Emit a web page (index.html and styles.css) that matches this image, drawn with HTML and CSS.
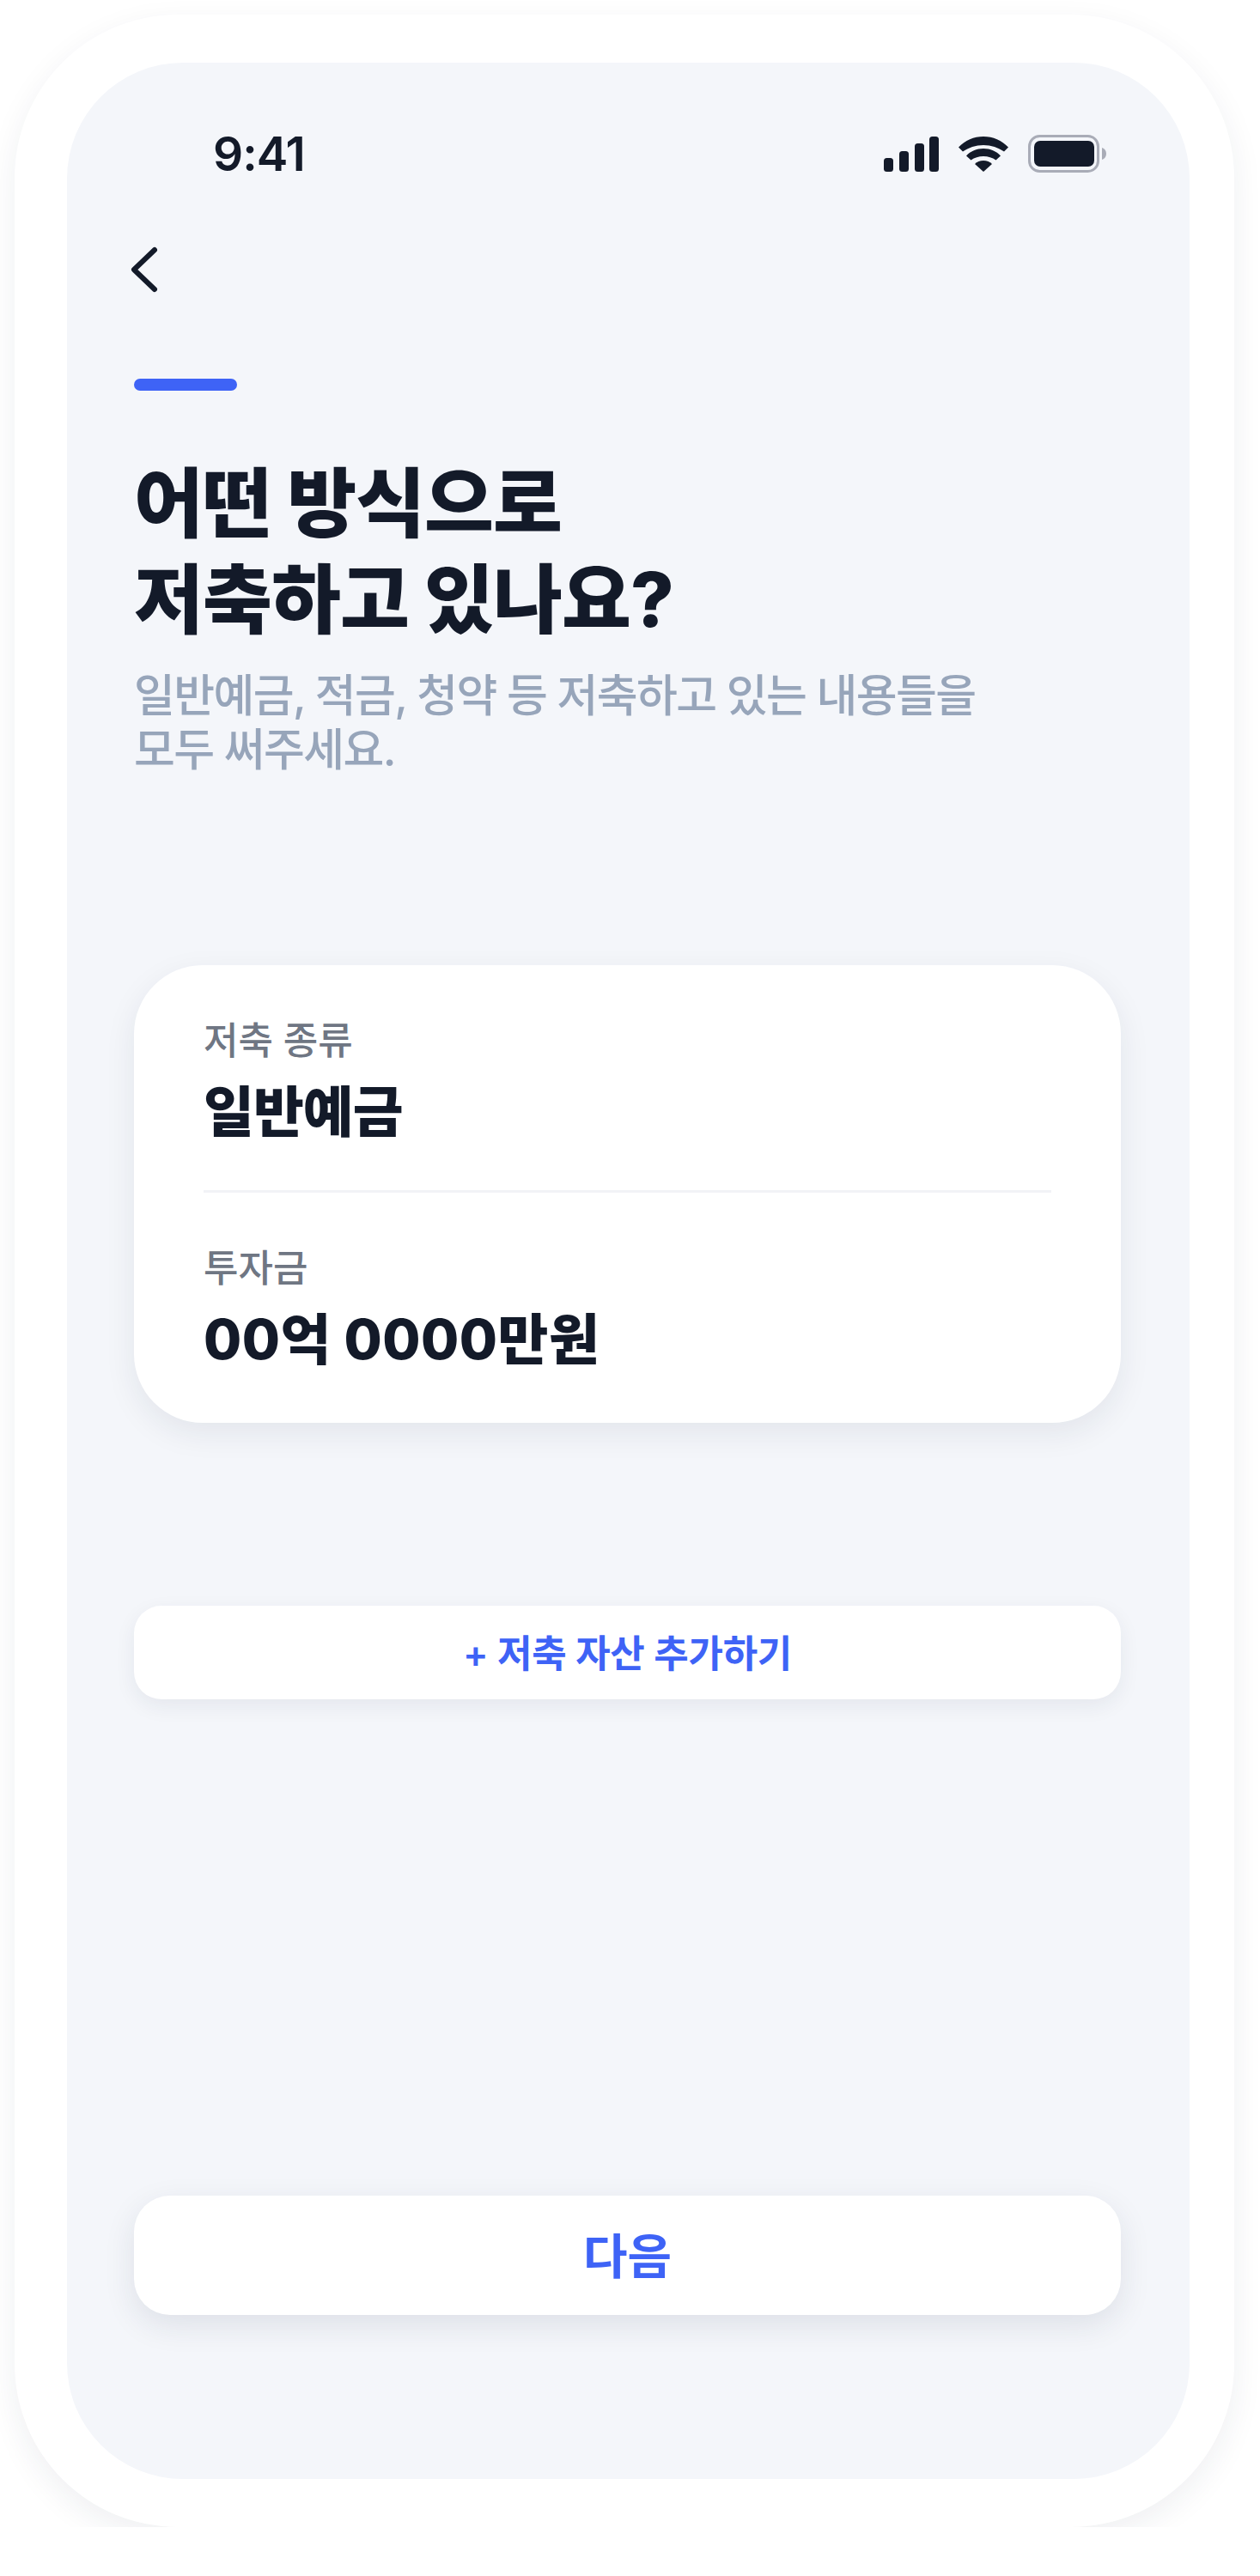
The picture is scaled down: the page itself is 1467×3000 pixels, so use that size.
FILE: index.html
```html
<!DOCTYPE html>
<html lang="ko">
<head>
<meta charset="UTF-8">
<meta name="viewport" content="width=device-width, initial-scale=1.0">
<title>저축 자산</title>
<link rel="stylesheet" href="styles.css">
</head>
<body>
	<div class="phone">
		<div class="screen">
			<div class="status">
				<span class="time">9:41</span>
				<div class="status-icons">
					<svg class="ic-signal" width="64" height="41" viewBox="0 0 64 41">
						<rect x="0" y="25" width="11" height="16" rx="3.5"/>
						<rect x="18" y="17" width="11" height="24" rx="3.5"/>
						<rect x="36" y="8" width="11" height="33" rx="3.5"/>
						<rect x="53" y="0" width="11" height="41" rx="3.5"/>
					</svg>
					<svg class="ic-wifi" width="58" height="41" viewBox="0 0 58 41">
						<path d="M0 12.500C7.500 4.500 18 0 29 0s21.500 4.500 29 12.500L53 17.500C46.500 13 38 10 29 10s-17.500 3-24 7.500z"/>
						<path d="M9 22.500C14 17 21 14 29 14s15 3 20 8.500L43.500 27.500C39.500 24.500 34.500 23 29 23s-10.500 1.500-14.500 4.500z"/>
						<path d="M19 32c2.500-2.500 6-4 10-4s7.500 1.500 10 4L29 41z"/>
					</svg>
					<svg class="ic-battery" width="92" height="44" viewBox="0 0 92 44">
						<rect x="1.500" y="1.500" width="80" height="41" rx="12" fill="none" stroke="#a9acb7" stroke-width="3"/>
						<rect x="7" y="7" width="70" height="30" rx="7" fill="#131a29"/>
						<path d="M86 15c3 1 5 3.500 5 7s-2 6-5 7z" fill="#a9acb7"/>
					</svg>
				</div>
			</div>

			<a class="back">
				<svg width="40" height="58" viewBox="0 0 40 58">
					<path d="M33 6L9 29l24 23" fill="none" stroke="#131a29" stroke-width="6" stroke-linecap="round" stroke-linejoin="round"/>
				</svg>
			</a>

			<div class="progress"></div>

			<h1 class="title">어떤 방식으로<br>저축하고 있나요?</h1>
			<p class="sub">일반예금, 적금, 청약 등 저축하고 있는 내용들을<br>모두 써주세요.</p>

			<div class="card">
				<div class="card-row">
					<div class="label">저축 종류</div>
					<div class="value">일반예금</div>
				</div>
				<div class="card-row card-row-last">
					<div class="label">투자금</div>
					<div class="value value-num">00억 0000만원</div>
				</div>
			</div>

			<button class="add-btn">+ 저축 자산 추가하기</button>
			<button class="next-btn">다음</button>
		</div>
	</div>
</body>
</html>
```

FILE: styles.css
```css
html, body {
	margin: 0;
	padding: 0;
	background-color: #fff;
}

body {
	font-family: "Inter", "Noto Sans CJK KR", sans-serif;
	color: #131a29;
}

.phone {
	width: 1420px;
	height: 2926px;
	margin: 17px 0 0 17px;
	padding: 56px 52px 56px 61px;
	box-sizing: border-box;
	background-color: #fff;
	border-radius: 190px;
	box-shadow: 0 12px 36px rgba(30, 40, 70, 0.07);
}

.screen {
	height: 100%;
	padding: 84px 80px 191px 78px;
	box-sizing: border-box;
	display: flex;
	flex-direction: column;
	background-color: #f4f6fa;
	border-radius: 135px;
}

.status {
	display: flex;
	justify-content: space-between;
	align-items: center;
	height: 44px;
	padding: 0 16px 0 92px;
}

.time {
	font-size: 55px;
	font-weight: 600;
	line-height: 44px;
	letter-spacing: -1px;
}

.status-icons {
	display: flex;
	align-items: center;
	gap: 23px;
}

.status-icons svg {
	display: block;
	fill: #131a29;
}

.back {
	display: block;
	width: 40px;
	height: 58px;
	margin: 84px 0 0 -9px;
	cursor: pointer;
}

.progress {
	width: 120px;
	height: 14px;
	margin-top: 98px;
	background-color: #3e63f6;
	border-radius: 7px;
}

.title {
	margin: 75px 0 0;
	font-size: 88px;
	font-weight: 800;
	line-height: 112px;
	letter-spacing: -1px;
}

.sub {
	margin: 25px 0 0;
	font-size: 52px;
	font-weight: 500;
	line-height: 63px;
	color: #97a5ba;
	letter-spacing: -1.6px;
}

.card {
	margin-top: 219px;
	height: 533px;
	padding: 0 81px;
	box-sizing: border-box;
	background-color: #fff;
	border-radius: 80px;
	box-shadow: 0 12px 36px rgba(30, 40, 70, 0.08);
}

.card-row {
	height: 265px;
	padding-top: 61px;
	box-sizing: border-box;
	border-bottom: 3px solid #f2f3f6;
}

.card-row-last {
	border-bottom: none;
}

.label {
	font-size: 44px;
	font-weight: 500;
	line-height: 54px;
	color: #6f7683;
}

.value {
	margin-top: 18px;
	font-size: 64px;
	font-weight: 800;
	line-height: 76px;
	letter-spacing: -1px;
}

.value-num {
	letter-spacing: 0.5px;
}

.add-btn, .next-btn {
	display: block;
	width: 100%;
	border: none;
	background-color: #fff;
	color: #3e63f6;
	font-family: inherit;
	cursor: pointer;
}

.add-btn {
	height: 109px;
	margin-top: 213px;
	padding: 0 0 3px;
	border-radius: 32px;
	font-size: 44px;
	font-weight: 600;
	letter-spacing: -0.3px;
	box-shadow: 0 8px 24px rgba(30, 40, 70, 0.07);
}

.next-btn {
	height: 139px;
	margin-top: auto;
	padding: 0 0 6px;
	border-radius: 42px;
	font-size: 56px;
	font-weight: 700;
	box-shadow: 0 12px 36px rgba(30, 40, 70, 0.1);
}
```
